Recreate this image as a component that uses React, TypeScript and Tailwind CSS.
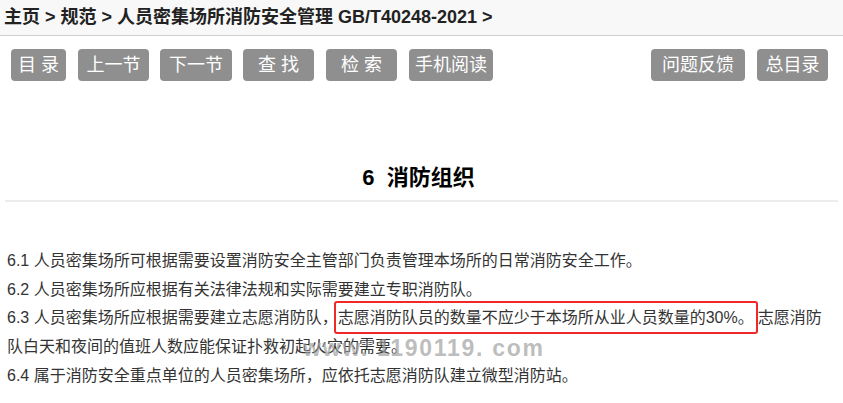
import React from 'react';

const font = { fontFamily: '"Liberation Sans", "Noto Sans CJK SC", sans-serif' };

const navLeft = [
  { label: '目 录', cls: 'w-[55px]' },
  { label: '上一节', cls: 'w-[71px] ml-[12px]' },
  { label: '下一节', cls: 'w-[72px] ml-[11px]' },
  { label: '查 找', cls: 'w-[71px] ml-[11px]' },
  { label: '检 索', cls: 'w-[71px] ml-[12px]' },
  { label: '手机阅读', cls: 'w-[84px] ml-[12px]' },
];

const NavButton: React.FC<{ label: string; cls: string }> = ({ label, cls }) => (
  <button className={`${cls} h-[32px] rounded-[4px] bg-[#8f8f8f] text-white text-[18px] leading-none whitespace-pre flex items-center justify-center`}>
    {label}
  </button>
);

export default function App() {
  return (
    <div className="w-[843px] h-[403px] bg-white overflow-hidden text-[#222]" style={font}>
      {/* 面包屑 */}
      <div className="h-[36px] bg-[#f8f8f8] border-b border-[#cfcfcf] flex items-center pl-[4px]">
        <span className="text-[18px] font-bold text-[#222]">
          主页 &gt; 规范 &gt; 人员密集场所消防安全管理 GB/T40248-2021 &gt;
        </span>
      </div>

      {/* 工具按钮 */}
      <div className="flex items-center justify-between pl-[11px] pr-[15px] mt-[13px]">
        <div className="flex">
          {navLeft.map(b => <NavButton key={b.label} {...b} />)}
        </div>
        <div className="flex">
          <NavButton label="问题反馈" cls="w-[94px]" />
          <NavButton label="总目录" cls="w-[71px] ml-[12px]" />
        </div>
      </div>

      {/* 标题 */}
      <div className="mt-[83px] mx-[5px] border-b-2 border-[#ececec] pb-[8px] text-center">
        <h1 className="text-[22px] font-bold text-black leading-[28px] pr-[6px] whitespace-pre">6  消防组织</h1>
      </div>

      {/* 正文 */}
      <div className="relative mt-[45px] pl-[7px] text-[16px] leading-[28.7px] text-[#333]">
        <p>6.1 人员密集场所可根据需要设置消防安全主管部门负责管理本场所的日常消防安全工作。</p>
        <p>6.2 人员密集场所应根据有关法律法规和实际需要建立专职消防队。</p>
        <p className="whitespace-nowrap">
          6.3 人员密集场所应根据需要建立志愿消防队，
          <span className="border-2 border-[#f0282a] rounded-[3px] -ml-[4px] px-[2px] py-[6px]">志愿消防队员的数量不应少于本场所从业人员数量的30%。</span>
          志愿消防
        </p>
        <p>队白天和夜间的值班人数应能保证扑救初起火灾的需要。</p>
        <p>6.4 属于消防安全重点单位的人员密集场所，应依托志愿消防队建立微型消防站。</p>

        <span className="absolute left-[303px] top-[90px] text-[23px] font-bold text-[#a0a0a0]/70 tracking-[1.7px] leading-none whitespace-pre pointer-events-none">
          www. 1190119. com
        </span>
      </div>
    </div>
  );
}
